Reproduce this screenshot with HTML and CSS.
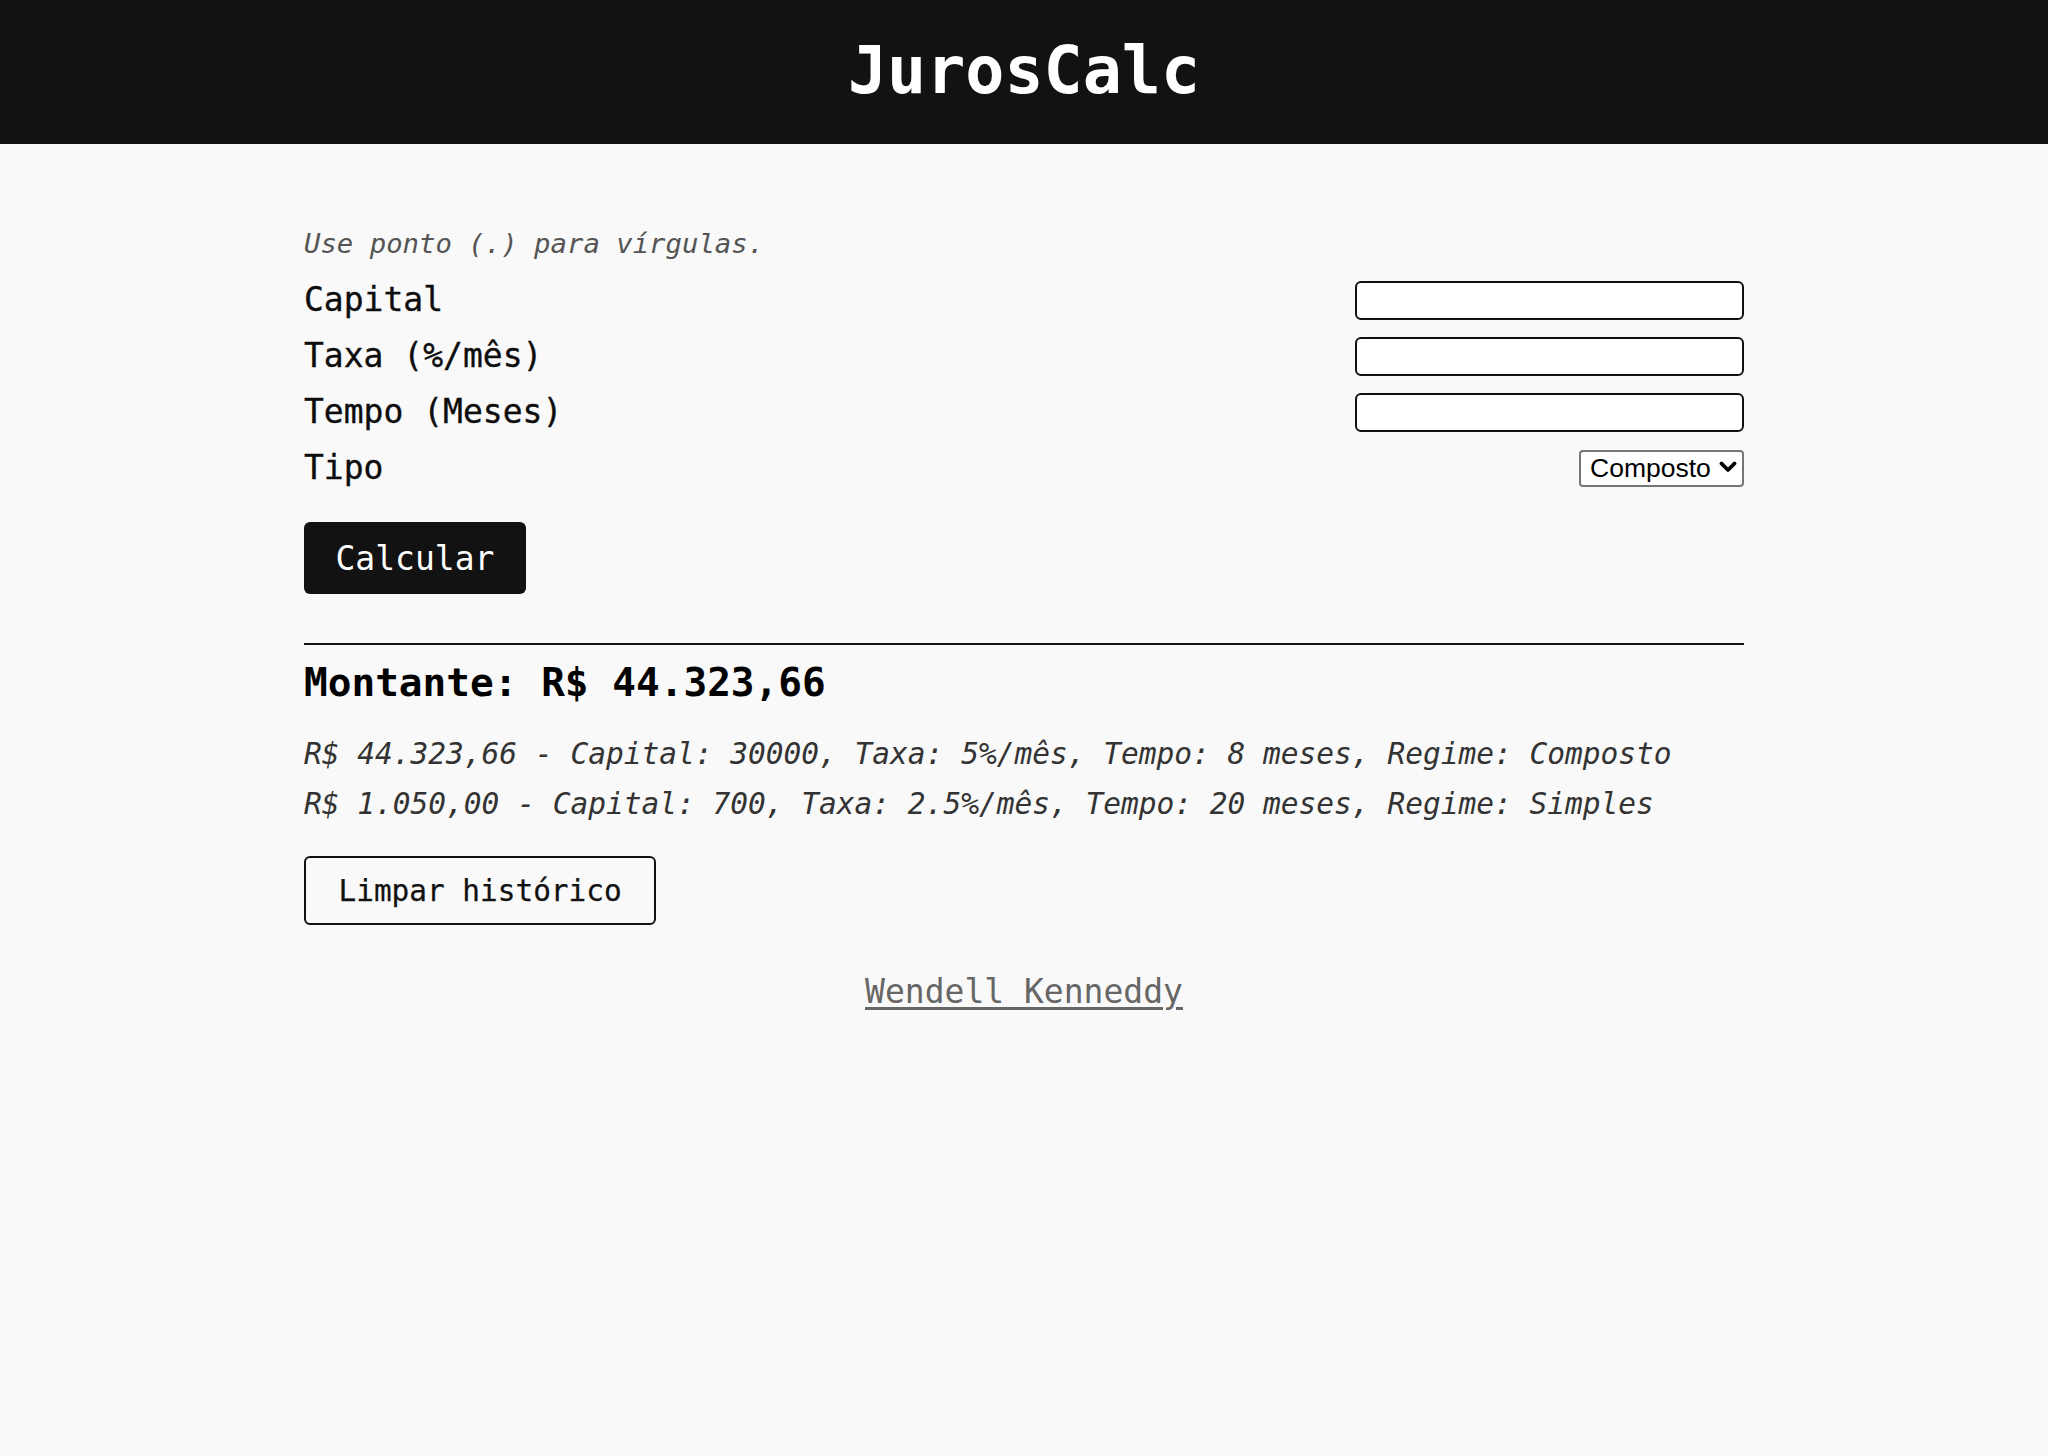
FILE: index.html
```html
<!DOCTYPE html>
<html lang="pt-BR">
<head>
<meta charset="utf-8">
<title>JurosCalc</title>
<link rel="stylesheet" href="styles.css">
</head>
<body>
<header class="topbar">
  <h1 class="brand">JurosCalc</h1>
</header>
<main class="main">
  <p class="hint">Use ponto (.) para vírgulas.</p>
  <form class="form">
    <div class="row">
      <label class="label" for="capital">Capital</label>
      <input class="field" id="capital" type="text">
    </div>
    <div class="row">
      <label class="label" for="taxa">Taxa (%/mês)</label>
      <input class="field" id="taxa" type="text">
    </div>
    <div class="row">
      <label class="label" for="tempo">Tempo (Meses)</label>
      <input class="field" id="tempo" type="text">
    </div>
    <div class="row">
      <label class="label" for="tipo">Tipo</label>
      <div class="select-wrap">
        <select class="select" id="tipo">
          <option>Composto</option>
          <option>Simples</option>
        </select>
        <svg class="chevron" width="18" height="12" viewBox="0 0 18 12" aria-hidden="true"><path d="M2.5 2.5 L9 9 L15.5 2.5" fill="none" stroke="#000" stroke-width="3.8" stroke-linecap="round" stroke-linejoin="round"/></svg>
      </div>
    </div>
  </form>
  <button class="btn-primary" type="button">Calcular</button>
  <hr class="divider">
  <h2 class="result">Montante: R$ 44.323,66</h2>
  <div class="history">
    <p class="history-item">R$ 44.323,66 - Capital: 30000, Taxa: 5%/mês, Tempo: 8 meses, Regime: Composto</p>
    <p class="history-item">R$ 1.050,00 - Capital: 700, Taxa: 2.5%/mês, Tempo: 20 meses, Regime: Simples</p>
  </div>
  <button class="btn-outline" type="button">Limpar histórico</button>
  <footer class="footer">
    <a class="author" href="#">Wendell Kenneddy</a>
  </footer>
</main>
</body>
</html>
```

FILE: styles.css
```css
* {
  box-sizing: border-box;
}

html, body {
  margin: 0;
  padding: 0;
}

body {
  background: #f9f9f9;
  color: #111;
  font-family: "DejaVu Sans Mono", "Liberation Mono", monospace;
  min-height: 1456px;
}

.topbar {
  background: #121212;
  height: 144px;
  padding-top: 33px;
}

.brand {
  margin: 0;
  text-align: center;
  color: #fff;
  font-size: 65px;
  line-height: 76px;
  font-weight: bold;
}

.main {
  width: 1440px;
  margin: 0 auto;
  padding-top: 84px;
}

.hint {
  margin: 0 0 20px;
  font-size: 27.3px;
  line-height: 32px;
  font-style: italic;
  color: #555;
}

.form {
  display: flex;
  flex-direction: column;
  gap: 16px;
}

.row {
  display: flex;
  justify-content: space-between;
  align-items: center;
  height: 40px;
}

.label {
  font-size: 33px;
  line-height: 40px;
  color: #0d0d0d;
  -webkit-text-stroke: 0.35px #0d0d0d;
}

.field {
  width: 389px;
  height: 39px;
  border: 2px solid #111;
  border-radius: 6px;
  background: #fff;
  font-family: inherit;
  font-size: 22px;
  padding: 0 8px;
}

.select-wrap {
  position: relative;
  width: 165px;
  height: 37px;
}

.select {
  appearance: none;
  -webkit-appearance: none;
  width: 100%;
  height: 100%;
  border: 2px solid #767676;
  border-radius: 4px;
  background: #fff;
  color: #000;
  font-family: "Liberation Sans", Arial, sans-serif;
  font-size: 26.5px;
  padding: 0 0 0 9px;
  line-height: 33px;
}

.chevron {
  position: absolute;
  right: 7px;
  top: 11px;
  pointer-events: none;
}

.btn-primary {
  display: block;
  margin-top: 34px;
  height: 72px;
  padding: 0 31.5px;
  background: #121212;
  color: #fff;
  border: none;
  border-radius: 6px;
  font-family: inherit;
  font-size: 33px;
}

.divider {
  margin: 49px 0 0;
  border: none;
  border-top: 2px solid #111;
  height: 0;
}

.result {
  margin: 14px 0 0;
  font-size: 39.4px;
  line-height: 46px;
  font-weight: bold;
  color: #000;
}

.history {
  margin-top: 24px;
}

.history-item {
  margin: 0;
  font-size: 29.5px;
  line-height: 50px;
  font-style: italic;
  color: #333;
  white-space: nowrap;
}

.btn-outline {
  display: block;
  margin-top: 27px;
  height: 69px;
  padding: 0 32.5px;
  background: transparent;
  color: #111;
  border: 2px solid #111;
  border-radius: 6px;
  font-family: inherit;
  font-size: 29.4px;
  -webkit-text-stroke: 0.25px #111;
}

.footer {
  margin-top: 47px;
  text-align: center;
  font-size: 33px;
  line-height: 40px;
}

.author {
  color: #666;
  text-decoration: underline;
  text-underline-offset: 4px;
}
```
